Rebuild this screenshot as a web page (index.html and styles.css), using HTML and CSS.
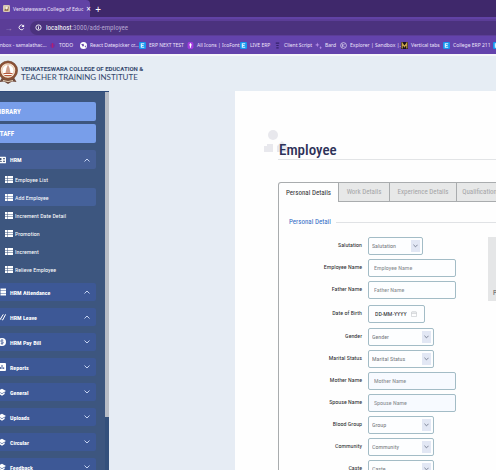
FILE: index.html
```html
<!DOCTYPE html>
<html lang="en">
<head>
<meta charset="utf-8">
<title>Venkateswara College of Education</title>
<link rel="stylesheet" href="styles.css">
</head>
<body>
<svg class="defs" aria-hidden="true">
  <symbol id="list" viewBox="0 0 16 14"><path fill="currentColor" d="M0 0h4v4H0zM5 0h11v4H5zM0 5h4v4H0zM5 5h11v4H5zM0 10h4v4H0zM5 10h11v4H5z"/></symbol>
  <symbol id="up" viewBox="0 0 12 8"><path fill="none" stroke="currentColor" stroke-width="2" d="M1 7l5-5 5 5"/></symbol>
  <symbol id="down" viewBox="0 0 12 8"><path fill="none" stroke="currentColor" stroke-width="2" d="M1 1l5 5 5-5"/></symbol>
  <symbol id="cap" viewBox="0 0 24 24"><path fill="currentColor" d="M0 9L12 2l12 7-12 7zM4 13l8 5 8-5v5l-8 5-8-5z"/></symbol>
  <symbol id="erp" viewBox="0 0 12 12"><rect width="12" height="12" rx="2" fill="#1696ee"/><path d="M9 3H4v6h5M4 6h4" fill="none" stroke="#d8f2ff" stroke-width="2"/></symbol>
</svg>
<header class="browser">
  <div class="tabs">
    <div class="browser-tab">
      <svg class="icon" viewBox="0 0 16 16"><rect width="16" height="16" rx="3" fill="#d9c8b4"/><path d="M3 13l3-9 3 4 4-5-1 10z" fill="#8c6842"/><circle cx="8" cy="7" r="3" fill="#f4eee4"/></svg>
      <span>Venkateswara College of Educ</span>
      <button class="plain" aria-label="Close tab">×</button>
    </div>
    <button class="plain new-tab" aria-label="New tab">+</button>
  </div>
  <div class="toolbar">
    <button class="plain forward" aria-label="Forward">→</button>
    <button class="plain reload" aria-label="Reload"><svg class="icon" viewBox="0 0 16 16"><path d="M13 10a5.500 5.500 0 1 1-1-6" fill="none" stroke="#fff" stroke-width="2"/><path d="M14 1v6H8z" fill="#fff"/></svg></button>
    <div class="address"><svg class="icon" viewBox="0 0 16 16"><circle cx="8" cy="8" r="6" fill="none" stroke="#fff" stroke-width="2"/><path d="M8 7v5M8 4v2" stroke="#fff" stroke-width="2"/></svg><span><b>localhost</b>:3000/add-employee</span></div>
  </div>
  <nav class="bookmarks" aria-label="Bookmarks">
    <a href="#" class="bm-inbox">Inbox - samalathac...</a>
    <a href="#" class="bm-todo"><svg class="icon" viewBox="0 0 12 12"><circle cx="6" cy="6" r="4" fill="#792aa0"/><path d="M6 2v8" stroke="#b0246e" stroke-width="2"/></svg>TODO</a>
    <a href="#" class="bm-react"><svg class="icon" viewBox="0 0 12 12"><circle cx="6" cy="6" r="6" fill="#fff"/><path d="M2 4l4-1 1 3-2 2M8 7l3-1-2 4z" fill="#6c48ab"/></svg>React Datepicker cr...</a>
    <a href="#" class="bm-next"><svg class="icon"><use href="#erp"/></svg>ERP NEXT TEST</a>
    <a href="#" class="bm-icons"><svg class="icon" viewBox="0 0 12 12"><rect x="1" width="10" height="12" rx="3" fill="#a33be0"/><path d="M6 2v8M4 5h4" stroke="#fff" stroke-width="2"/></svg>All Icons | IcoFont</a>
    <a href="#" class="bm-live"><svg class="icon"><use href="#erp"/></svg>LIVE ERP</a>
    <a href="#" class="bm-client"><svg class="icon" viewBox="0 0 12 12"><path d="M3 2h6M4 6h4M4 10h4" stroke="#35226b" stroke-width="2"/></svg>Client Script</a>
    <a href="#" class="bm-bard"><svg class="icon" viewBox="0 0 12 12"><path d="M4 1l1 3 3 1-3 1-1 3-1-3-3-1 3-1zM9 7l1 2 2 1-2 1-1 1-1-2z" fill="#b78fe8"/></svg>Bard</a>
    <a href="#" class="bm-explorer"><svg class="icon" viewBox="0 0 12 12"><circle cx="6" cy="6" r="5" fill="none" stroke="#fff"/><path d="M4 3v6M8 3L5 6l3 3" fill="none" stroke="#fff"/></svg>Explorer | Sandbox |...</a>
    <a href="#" class="bm-vertical"><svg class="icon" viewBox="0 0 12 12"><rect width="12" height="12" fill="#18121c"/><path d="M2 11V2l4 6 4-6v9" fill="none" stroke="#c9a24a" stroke-width="2"/></svg>Vertical tabs</a>
    <a href="#" class="bm-college"><svg class="icon"><use href="#erp"/></svg>College ERP 211</a>
    <a href="#" aria-label="More bookmarks"><svg class="icon"><use href="#erp"/></svg></a>
  </nav>
</header>
<header class="site">
  <svg class="crest" viewBox="0 0 40 48"><path d="M8 34l-5 9 9-1 8 5 8-5 9 1-5-9z" fill="#704b3d"/><circle cx="20" cy="20" r="17" fill="#f6e8d8" stroke="#8d5135" stroke-width="5"/><circle cx="20" cy="20" r="19" fill="none" stroke="#6b5545"/><circle cx="20" cy="20" r="12" fill="#fff" stroke="#d6a175"/><path d="M20 8l3 7 2 10H15l2-10z" fill="#cd9d8a"/><path d="M11 25h18v2H11zM13 29h14v2H13z" fill="#b6583c"/><path d="M10 40q10 4 20 0" fill="none" stroke="#e7d2b5" stroke-width="2"/></svg>
  <div class="brand"><strong>VENKATESWARA COLLEGE OF EDUCATION &amp;</strong><span>TEACHER TRAINING INSTITUTE</span></div>
</header>
<div class="layout">
  <aside class="sidebar">
    <nav class="menu" aria-label="Main">
      <button class="top">LIBRARY</button>
      <button class="top">STAFF</button>
      <button class="group open"><svg class="gi" viewBox="0 0 24 20"><rect width="24" height="20" rx="2" fill="#fff"/><circle cx="8" cy="7" r="3" fill="#30466f"/><path d="M3 15q5-6 10 0zM15 5h6v3h-6zM15 12h6v3h-6z" fill="#30466f"/></svg><span>HRM</span><svg class="chev"><use href="#up"/></svg></button>
      <ul>
        <li><a href="#"><svg><use href="#list"/></svg>Employee List</a></li>
        <li><a href="#" class="active"><svg><use href="#list"/></svg>Add Employee</a></li>
        <li><a href="#"><svg><use href="#list"/></svg>Increment Date Detail</a></li>
        <li><a href="#"><svg><use href="#list"/></svg>Promotion</a></li>
        <li><a href="#"><svg><use href="#list"/></svg>Increment</a></li>
        <li><a href="#"><svg><use href="#list"/></svg>Relieve Employee</a></li>
      </ul>
      <div class="groups">
        <button class="group"><svg class="gi"><use href="#list"/></svg><span>HRM Attendance</span><svg class="chev"><use href="#up"/></svg></button>
        <button class="group"><svg class="gi" viewBox="0 0 24 24"><path d="M1 14l5 6L16 4M11 19l3 2L23 4" fill="none" stroke="#fff" stroke-width="3"/></svg><span>HRM Leave</span><svg class="chev"><use href="#up"/></svg></button>
        <button class="group"><svg class="gi" viewBox="0 0 24 24"><circle cx="12" cy="12" r="12" fill="#fff"/><path d="M16 7q-8-3-8 2t8 3q1 8-8 4M12 3v18" fill="none" stroke="#3f5997" stroke-width="2"/></svg><span>HRM Pay Bill</span><svg class="chev"><use href="#down"/></svg></button>
        <button class="group"><svg class="gi" viewBox="0 0 24 24"><rect width="24" height="24" rx="3" fill="#fff"/><path d="M7 18v-6M12 18V6M17 18v-5" stroke="#3f5997" stroke-width="3"/></svg><span>Reports</span><svg class="chev"><use href="#down"/></svg></button>
        <button class="group"><svg class="gi"><use href="#cap"/></svg><span>General</span><svg class="chev"><use href="#down"/></svg></button>
        <button class="group"><svg class="gi"><use href="#cap"/></svg><span>Uploads</span><svg class="chev"><use href="#down"/></svg></button>
        <button class="group"><svg class="gi"><use href="#cap"/></svg><span>Circular</span><svg class="chev"><use href="#down"/></svg></button>
        <button class="group"><svg class="gi"><use href="#cap"/></svg><span>Feedback</span><svg class="chev"><use href="#down"/></svg></button>
      </div>
    </nav>
    <div class="scroll"><div class="thumb"></div></div>
  </aside>
  <main>
    <div class="heading">
      <svg class="deco" viewBox="0 0 24 24"><circle cx="10" cy="6" r="5"/><path d="M1 23v-6h3v-2h6v8zM14 23v-6l5-5 5 5v6z"/></svg>
      <h1>Employee</h1>
    </div>
    <div class="form-tabs" role="tablist">
      <button role="tab" aria-selected="true" class="selected">Personal Details</button>
      <button role="tab">Work Details</button>
      <button role="tab">Experience Details</button>
      <button role="tab">Qualification Details</button>
    </div>
    <section class="panel">
      <h2>Personal Detail</h2>
      <div class="content">
        <form>
          <div class="row"><label for="sal">Salutation</label><div class="pick short"><select id="sal"><option>Salutation</option></select><svg><use href="#down"/></svg></div></div>
          <div class="row"><label for="emp">Employee Name</label><input id="emp" placeholder="Employee Name"></div>
          <div class="row"><label for="father">Father Name</label><input id="father" placeholder="Father Name"></div>
          <div class="row birth"><label for="dob">Date of Birth</label><div class="date"><input id="dob" placeholder="DD-MM-YYYY"><svg viewBox="0 0 12 12"><path d="M1 2h10v9H1zM1 5h10M4 0v3M8 0v3" fill="none" stroke="#b8bcc0"/></svg></div></div>
          <div class="row"><label for="gender">Gender</label><div class="pick"><select id="gender"><option>Gender</option></select><svg><use href="#down"/></svg></div></div>
          <div class="row"><label for="marital">Marital Status</label><div class="pick"><select id="marital"><option>Marital Status</option></select><svg><use href="#down"/></svg></div></div>
          <div class="row"><label for="mother">Mother Name</label><input id="mother" class="tint" placeholder="Mother Name"></div>
          <div class="row"><label for="spouse">Spouse Name</label><input id="spouse" class="tint" placeholder="Spouse Name"></div>
          <div class="row"><label for="blood">Blood Group</label><div class="pick"><select id="blood"><option>Group</option></select><svg><use href="#down"/></svg></div></div>
          <div class="row"><label for="community">Community</label><div class="pick"><select id="community"><option>Community</option></select><svg><use href="#down"/></svg></div></div>
          <div class="row"><label for="caste">Caste</label><div class="pick"><select id="caste"><option>Caste</option></select><svg><use href="#down"/></svg></div></div>
        </form>
        <div class="photo">P</div>
      </div>
    </section>
  </main>
</div>
</body>
</html>
```
FILE: styles.css
```css
* { box-sizing: border-box; }
html { height: 100%; }
body {
  margin: 0;
  height: 100%;
  display: flex;
  flex-direction: column;
  overflow: hidden;
  background: #e6ecf4;
  font-family: "Roboto Condensed", "Liberation Sans Narrow", Roboto, sans-serif;
  font-size: 7px;
}
button, input, select { font: inherit; margin: 0; }
button { border: 0; cursor: pointer; }
a { color: inherit; text-decoration: none; }
svg { flex: none; }
.defs { position: absolute; width: 0; height: 0; }
.icon { width: 7px; height: 7px; }

.browser { flex: none; color: #eee5fb; font-family: "Noto Sans", sans-serif; font-size: 6px; }
.tabs { display: flex; height: 17px; background: #3f286b; }
.browser-tab {
  display: flex;
  align-items: center;
  gap: 3px;
  width: 90px;
  padding: 0 4px 0 3px;
  border-radius: 0 4px 0 0;
  background: #6142a5;
  font-size: 5px;
  white-space: nowrap;
}
.browser-tab span { flex: 1; }
.plain { padding: 0; background: none; color: #fff; line-height: 1; }
.browser-tab .plain { font-size: 8px; }
.new-tab { width: 16px; font-size: 10px; }
.toolbar { display: flex; align-items: center; height: 19px; padding-left: 4px; border-top: 2px solid #6142a5; background: #5b3d97; }
.toolbar .plain { font-size: 8px; }
.forward { width: 9px; opacity: 0.4; }
.reload { width: 17px; }
.address { display: flex; flex: 1; align-items: center; gap: 4px; height: 14px; padding-left: 5px; border-radius: 7px 0 0 7px; background: #4b327e; color: #b3a3d0; font-family: "Roboto Condensed", Roboto, sans-serif; font-size: 7px; }
.address b { color: #fff; font-weight: 400; }
.bookmarks { display: flex; align-items: center; height: 18px; background: #6343ac; font-size: 5px; white-space: nowrap; overflow: hidden; }
.bookmarks a { display: flex; flex: none; align-items: center; gap: 3px; }
.bm-inbox { width: 51px; margin-left: -2px; }
.bm-todo { width: 31px; }
.bm-react { width: 59px; }
.bm-next { width: 48px; }
.bm-icons { width: 53px; }
.bm-live { width: 34px; }
.bm-client { width: 41px; }
.bm-bard { width: 25px; }
.bm-explorer { width: 61px; }
.bm-vertical { width: 42px; }
.bm-college { width: 50px; }

.site { display: flex; flex: none; align-items: center; gap: 3px; height: 37px; padding-bottom: 2px; border-top: 2px solid #f6f7fa; background: #e6edf4; color: #34486d; }
.crest { width: 20px; height: 25px; margin-left: -2px; }
.brand { display: flex; flex-direction: column; font-family: Lato, sans-serif; line-height: 8px; white-space: nowrap; }
.brand strong { font-family: Roboto, sans-serif; font-size: 6px; }
.brand span { font-size: 8px; }

.layout { display: grid; grid-template-columns: 109px 1fr; flex: 1; min-height: 0; column-gap: 126px; }
.sidebar { display: flex; min-height: 0; overflow: hidden; border-top: 1px solid #2e4a7a; background: #3d567f; color: #fff; font-size: 6px; }
.menu { flex: 1; padding: 10px 9px 0 0; margin-left: -8px; }
.menu button { display: flex; align-items: center; width: 100%; height: 18px; border-radius: 2px; color: #fff; }
.menu .top { height: 19px; margin-bottom: 3px; padding: 0 4px; background: #789eea; font-size: 7px; font-weight: 700; }
.menu .group { padding: 0 6px; gap: 4px; background: #3d5896; font-weight: 700; }
.menu .open { height: 19px; margin-top: 7px; background: #465f96; }
.group span { flex: 1; text-align: left; white-space: nowrap; }
.gi { width: 8px; height: 8px; }
.chev { width: 6px; height: 4px; color: #c5d3f2; }
.menu ul { margin: 1px 0 5px; padding: 0; list-style: none; }
.menu li a { display: flex; align-items: center; height: 18px; gap: 2px; padding-left: 13px; border-radius: 2px; white-space: nowrap; }
.menu li svg { width: 8px; height: 7px; }
.menu .active { background: #45619a; }
.groups { display: flex; flex-direction: column; gap: 7px; }
.scroll { width: 4px; background: #34507b; }
.thumb { height: 86%; background: #b9bdc6; }

main { min-width: 0; overflow: hidden; padding: 40px 0 0 43px; background: #fefefe; }
.heading { display: flex; position: relative; height: 29px; align-items: flex-end; border-bottom: 1px solid #e2e4e6; }
h1 { position: relative; margin: 0; padding-left: 1px; color: #2d3158; font-size: 15px; font-weight: 500; line-height: 16px; }
.heading { padding-bottom: 1px; }
.deco { position: absolute; left: -15px; top: -2px; width: 24px; height: 24px; fill: #e8e8ed; }
.form-tabs { display: flex; margin-top: 22px; overflow: hidden; }
.form-tabs button { flex: none; height: 20px; padding: 0; border: 1px solid #a9acae; border-left: 0; background: #e7e8e8; color: #a5a5a7; width: 67px; }
.form-tabs button:nth-child(2) { width: 51px; }
.form-tabs .selected { width: 61px; border-left: 1px solid #a9acae; border-bottom: 0; border-radius: 3px 0 0 0; background: #fefefe; color: #2f3033; }
.panel { height: 100%; padding: 15px 0 0 10px; border-left: 1px solid #a9acae; }
h2 { display: flex; align-items: center; gap: 5px; margin: 0 0 10px; color: #326bc5; font-size: 7px; font-weight: 400; line-height: 10px; }
h2::after { content: ""; flex: 1; height: 1px; background: #e0e2e5; }
.content { display: flex; justify-content: space-between; }
form { display: flex; flex-direction: column; gap: 4px; }
.row { display: grid; grid-template-columns: 73px 88px; column-gap: 6px; height: 18px; }
.birth { margin: 2px 0 1px; }
label { color: #28292c; font-size: 6px; line-height: 16px; text-align: right; }
input, select { width: 100%; height: 18px; min-width: 0; border: 1px solid #a3bcc6; border-radius: 2px; outline: 0; background: #fdfeff; color: #75797e; font-size: 6px; }
input { padding: 0 5px 1px; }
input::placeholder { color: #85898d; opacity: 1; }
.tint { background: #f7faff; }
select { appearance: none; padding: 0 3px 1px; }
.pick, .date { position: relative; width: 66px; }
.pick.short { width: 55px; }
.pick svg { position: absolute; right: 3px; top: 3px; width: 9px; height: 12px; padding: 4px 2px; background: #e2e7f4; color: #6a7285; }
.date { width: 57px; }
.date input { padding-left: 6px; }
.date input::placeholder { color: #242629; }
.date svg { position: absolute; right: 8px; top: 6px; width: 6px; height: 6px; }
.photo { width: 8px; height: 64px; padding: 52px 0 0 5px; overflow: hidden; background: #e5e6e7; color: #55585c; }
```
